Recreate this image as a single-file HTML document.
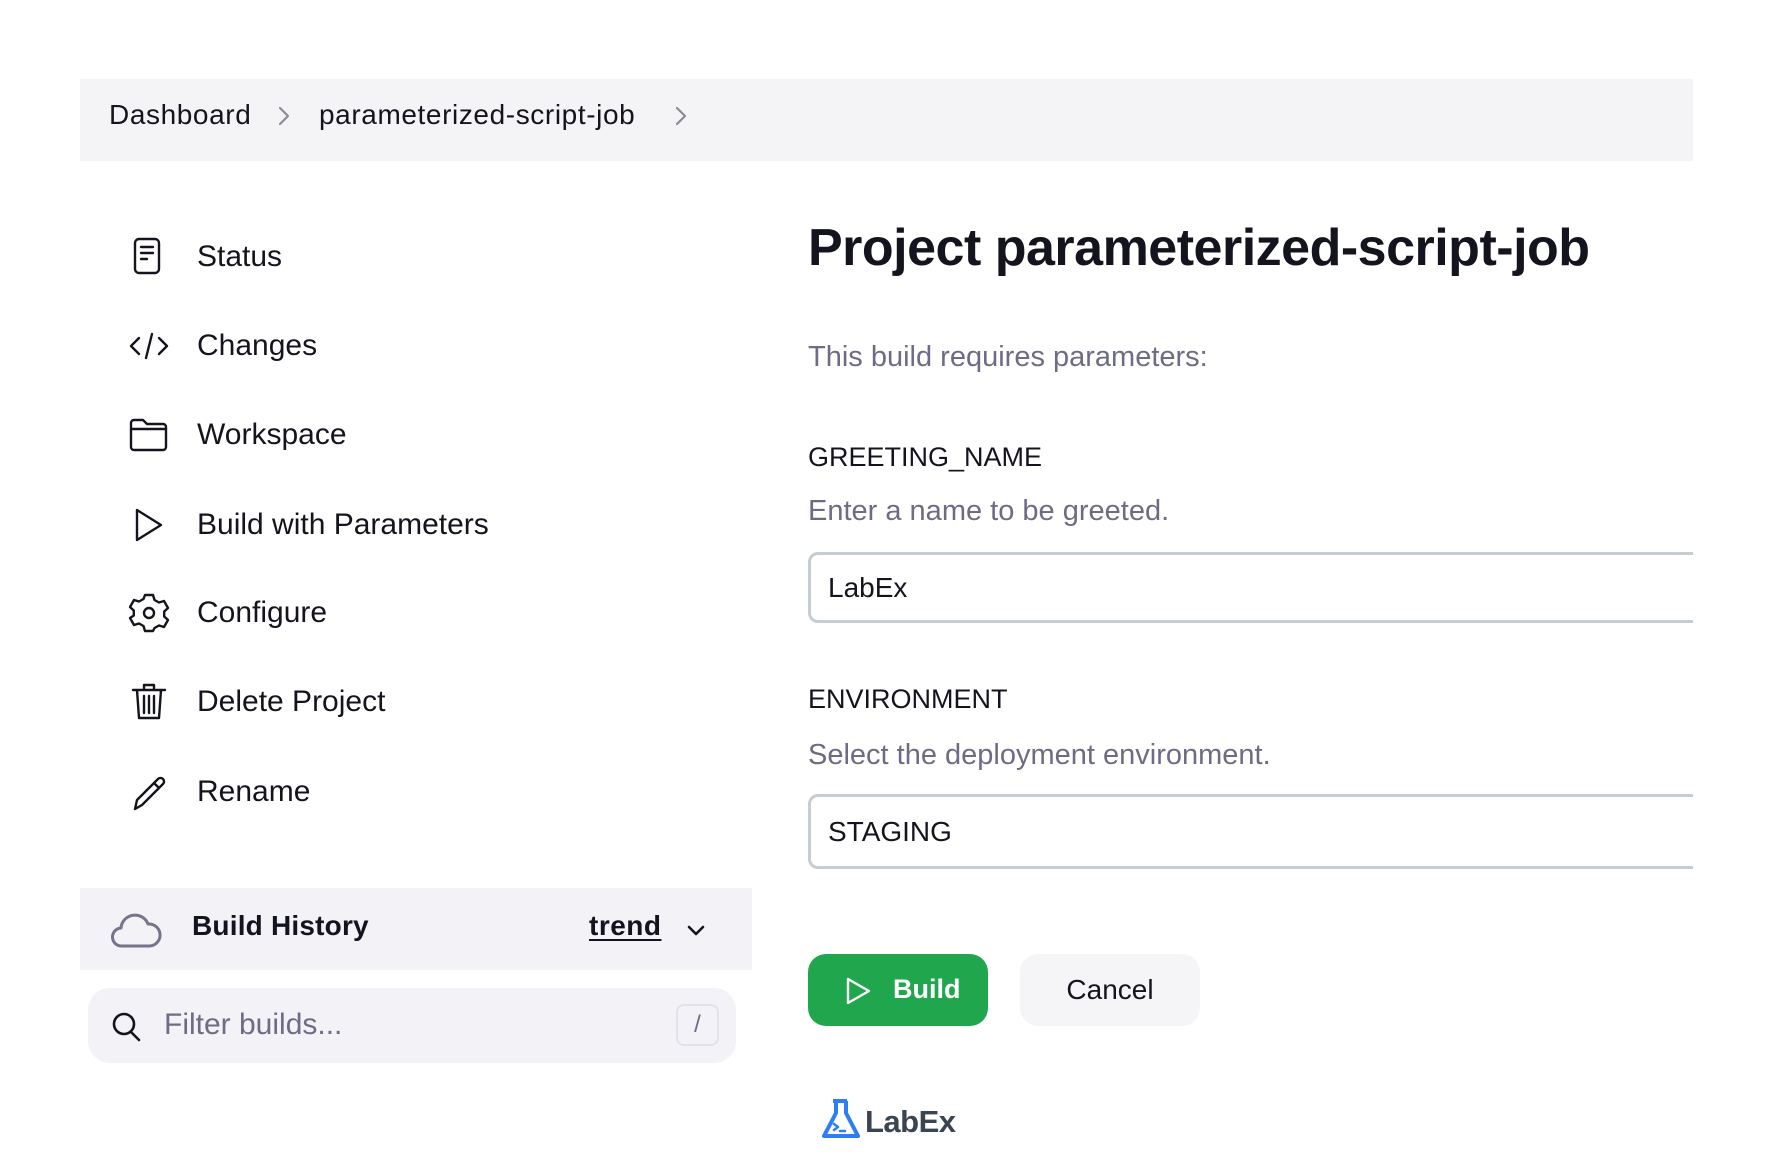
<!DOCTYPE html>
<html><head><meta charset="utf-8"><style>
*{margin:0;padding:0;box-sizing:border-box}
body{width:1774px;height:1160px;background:#fff;font-family:"Liberation Sans",sans-serif;color:#14141f;position:relative;overflow:hidden}
.a{position:absolute;white-space:nowrap}
.bc{left:80px;top:79px;width:1613px;height:82px;background:#f4f4f6}
.t26{font-size:28px;letter-spacing:0.6px}
.gray{color:#6e6c85}
.nav{left:197px;font-size:30px;line-height:34px}
.ic{position:absolute;left:127px;width:44px;height:44px}
.clip{position:absolute;left:800px;width:893px;overflow:hidden}
.inp{position:absolute;left:8px;width:1000px;border:3px solid #c6cdd2;border-radius:10px;font-size:28px;padding-left:17px;top:0}
</style></head><body>
<div class="a bc"></div>
<div class="a t26" style="left:109px;top:99px">Dashboard</div>
<svg class="a" style="left:276px;top:104px" width="16" height="24" viewBox="0 0 16 24"><path d="M4 4l8 8-8 8" fill="none" stroke="#8a8a99" stroke-width="2.2" stroke-linecap="round" stroke-linejoin="round"/></svg>
<div class="a t26" style="left:319px;top:99px">parameterized-script-job</div>
<svg class="a" style="left:673px;top:104px" width="16" height="24" viewBox="0 0 16 24"><path d="M4 4l8 8-8 8" fill="none" stroke="#8a8a99" stroke-width="2.2" stroke-linecap="round" stroke-linejoin="round"/></svg>

<svg class="ic" style="top:235px" viewBox="0 0 44 44" fill="none" stroke="#14141f" stroke-width="2.4" stroke-linecap="round" stroke-linejoin="round"><rect x="8" y="4" width="24" height="34" rx="4"/><path d="M14 12h12M14 18h12M14 24h6"/></svg>
<div class="a nav" style="top:240px">Status</div>
<svg class="ic" style="top:324px" viewBox="0 0 44 44" fill="none" stroke="#14141f" stroke-width="2.4" stroke-linecap="round" stroke-linejoin="round"><path d="M12 14l-8 8 8 8M32 14l8 8-8 8M25 10l-6 24"/></svg>
<div class="a nav" style="top:329px">Changes</div>
<svg class="ic" style="top:413px" viewBox="0 0 44 44" fill="none" stroke="#14141f" stroke-width="2.4" stroke-linejoin="round"><path d="M4 10a3 3 0 0 1 3-3h9l4 4h16a3 3 0 0 1 3 3v20a3 3 0 0 1-3 3H7a3 3 0 0 1-3-3z"/><path d="M4 16h35"/></svg>
<div class="a nav" style="top:418px">Workspace</div>
<svg class="ic" style="top:503px" viewBox="0 0 44 44" fill="none" stroke="#14141f" stroke-width="2.4" stroke-linejoin="round"><path d="M10 7v30l24-15z"/></svg>
<div class="a nav" style="top:508px">Build with Parameters</div>
<svg class="ic" style="top:591px" viewBox="0 0 44 44" fill="none" stroke="#14141f" stroke-width="2.4" stroke-linejoin="round"><path d="M18 4h8l1.5 5 4.5 2.5 5-1.5 4 7-3.8 3.5v5l3.8 3.5-4 7-5-1.5-4.5 2.5L26 40h-8l-1.5-5-4.5-2.5-5 1.5-4-7L6.8 24.5v-5L3 16l4-7 5 1.5L16.5 8z"/><circle cx="22" cy="22" r="5"/></svg>
<div class="a nav" style="top:596px">Configure</div>
<svg class="ic" style="top:680px" viewBox="0 0 44 44" fill="none" stroke="#14141f" stroke-width="2.4" stroke-linecap="round" stroke-linejoin="round"><path d="M6 10h32M17 10V5h10v5M10 10l2 28h20l2-28M17 16v17M22 16v17M27 16v17"/></svg>
<div class="a nav" style="top:685px">Delete Project</div>
<svg class="ic" style="top:770px" viewBox="0 0 44 44" fill="none" stroke="#14141f" stroke-width="2.4" stroke-linecap="round" stroke-linejoin="round"><path d="M8 39l2-9L31 9a3 3 0 0 1 5 5L15 35z M27 13l5 5"/></svg>
<div class="a nav" style="top:775px">Rename</div>

<div class="a" style="left:80px;top:888px;width:672px;height:82px;background:#f2f2f7"></div>
<svg class="a" style="left:110px;top:908px" width="52" height="42" viewBox="0 0 52 42" fill="none" stroke="#76748a" stroke-width="3" stroke-linejoin="round"><path d="M12 38a9 9 0 0 1-1-18A14 14 0 0 1 38 16a11 11 0 0 1 2 22z"/></svg>
<div class="a" style="left:192px;top:910px;font-size:28px;font-weight:bold;letter-spacing:0.2px">Build History</div>
<div class="a" style="left:589px;top:910px;font-size:28px;font-weight:bold;text-decoration:underline;text-underline-offset:4px;letter-spacing:0.5px">trend</div>
<svg class="a" style="left:684px;top:918px" width="24" height="24" viewBox="0 0 24 24"><path d="M5 9l7 7 7-7" fill="none" stroke="#14141f" stroke-width="2.6" stroke-linecap="round" stroke-linejoin="round"/></svg>
<div class="a" style="left:88px;top:988px;width:648px;height:75px;background:#f2f2f7;border-radius:22px"></div>
<svg class="a" style="left:110px;top:1010px" width="34" height="34" viewBox="0 0 34 34" fill="none" stroke="#14141f" stroke-width="2.6" stroke-linecap="round"><circle cx="14" cy="14" r="10"/><path d="M21 22l8 8"/></svg>
<div class="a gray" style="left:164px;top:1008px;font-size:30px">Filter builds...</div>
<div class="a gray" style="left:676px;top:1004px;width:43px;height:42px;border:2px solid #e2e2ea;border-radius:8px;font-size:24px;text-align:center;line-height:38px">/</div>

<div class="a" style="left:808px;top:218px;font-size:52px;font-weight:bold;letter-spacing:-0.5px">Project parameterized-script-job</div>
<div class="a gray" style="left:808px;top:341px;font-size:29px">This build requires parameters:</div>
<div class="a" style="left:808px;top:442px;font-size:27px">GREETING_NAME</div>
<div class="a gray" style="left:808px;top:495px;font-size:29px">Enter a name to be greeted.</div>
<div class="clip" style="top:552px;height:71px"><div class="inp" style="height:71px;line-height:65px">LabEx</div></div>
<div class="a" style="left:808px;top:684px;font-size:27px">ENVIRONMENT</div>
<div class="a gray" style="left:808px;top:739px;font-size:29px">Select the deployment environment.</div>
<div class="clip" style="top:794px;height:75px"><div class="inp" style="height:75px;line-height:69px">STAGING</div></div>

<div class="a" style="left:808px;top:954px;width:180px;height:72px;background:#20a74e;border-radius:18px"></div>
<svg class="a" style="left:843px;top:976px" width="30" height="30" viewBox="0 0 30 30"><path d="M5 3v24l21-12z" fill="none" stroke="#fff" stroke-width="2.4" stroke-linejoin="round"/></svg>
<div class="a" style="left:893px;top:974px;font-size:27px;font-weight:bold;color:#fff">Build</div>
<div class="a" style="left:1020px;top:954px;width:180px;height:72px;background:#f5f5f8;border-radius:18px;font-size:28px;text-align:center;line-height:72px">Cancel</div>

<svg class="a" style="left:820px;top:1098px" width="42" height="42" viewBox="0 0 42 42" fill="none" stroke="#2e7cf6" stroke-width="4" stroke-linejoin="round"><path d="M13 3h14M16 3v12L4 38h34L26 15V3"/><path d="M14 26l4 3-4 3M20 33h5" stroke-width="2.5" stroke-linecap="round"/></svg>
<div class="a" style="left:865px;top:1104px;font-size:31px;color:#3a4452;font-weight:bold;letter-spacing:-0.5px">LabEx</div>
</body></html>
